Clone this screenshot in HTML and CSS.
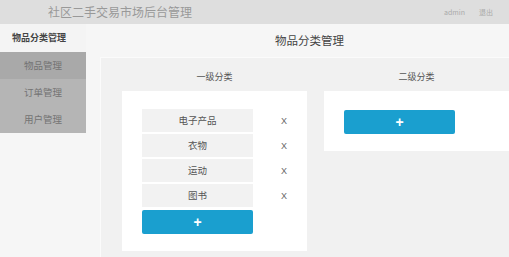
FILE: index.html
```html
<!DOCTYPE html>
<html lang="zh-CN">
<head>
  <meta charset="UTF-8">
  <meta name="viewport" content="width=device-width, initial-scale=1.0">
  <title>社区二手交易市场后台管理</title>
  <link rel="stylesheet" href="styles.css">
</head>
<body>
  <div class="header">
    <div class="site-title">社区二手交易市场后台管理</div>
    <div class="user">
      <span class="user-name">admin</span>
      <span class="logout">退出</span>
    </div>
  </div>

  <div class="layout">
    <div class="sidebar">
      <div class="sidebar-title">物品分类管理</div>
      <ul class="menu">
        <li class="active">物品管理</li>
        <li>订单管理</li>
        <li>用户管理</li>
      </ul>
    </div>

    <div class="main">
      <h1>物品分类管理</h1>
      <div class="panel">
        <div class="column">
          <h2>一级分类</h2>
          <div class="card">
            <div class="row"><div class="item">电子产品</div><span class="remove">X</span></div>
            <div class="row"><div class="item">衣物</div><span class="remove">X</span></div>
            <div class="row"><div class="item">运动</div><span class="remove">X</span></div>
            <div class="row"><div class="item">图书</div><span class="remove">X</span></div>
            <button class="add">+</button>
          </div>
        </div>
        <div class="column">
          <h2>二级分类</h2>
          <div class="card">
            <button class="add">+</button>
          </div>
        </div>
      </div>
    </div>
  </div>
</body>
</html>
```

FILE: styles.css
```css
body {
  font-family: "Noto Sans CJK SC", "Noto Sans", sans-serif;
  background-color: #f6f6f6;
  color: #555;
  margin: 0;
  padding: 0;
  height: 257px;
  overflow: hidden;
}
.header {
  height: 24px;
  background-color: #dedede;
  display: flex;
  align-items: center;
  justify-content: space-between;
  padding: 0 16px 0 48px;
}
.site-title {
  font-size: 12px;
  color: #999;
  line-height: 24px;
}
.user {
  display: flex;
  gap: 14px;
  font-size: 7px;
  color: #aaa;
}
.layout {
  display: flex;
}
.sidebar {
  width: 86px;
}
.sidebar-title {
  height: 28px;
  line-height: 28px;
  padding-left: 12px;
  font-size: 9px;
  font-weight: bold;
  color: #444;
  background-color: #f4f4f4;
}
.menu {
  list-style: none;
  margin: 0;
  padding: 0;
  background-color: #b5b5b5;
}
.menu li {
  height: 27px;
  line-height: 27px;
  text-align: center;
  font-size: 9.5px;
  color: #737373;
}
.menu li.active {
  background-color: #a9a9a9;
}
.main {
  flex: 1;
}
h1 {
  margin: 0;
  padding-left: 24px;
  height: 33px;
  line-height: 33px;
  text-align: center;
  font-size: 11.5px;
  font-weight: normal;
  color: #444;
}
.panel {
  margin-left: 14px;
  border: 1px solid #fbfbfb;
  border-right: none;
  background-color: #f1f1f1;
  padding: 13px 0 6px 21px;
  display: flex;
  gap: 17px;
  align-items: flex-start;
}
.column {
  width: 185px;
}
h2 {
  margin: 0 0 8px;
  font-size: 9px;
  line-height: 12px;
  font-weight: normal;
  text-align: center;
  color: #555;
}
.card {
  background-color: #fff;
  padding: 18px 20px 17px;
  display: flex;
  flex-direction: column;
  gap: 2px;
}
.row {
  display: flex;
  align-items: center;
}
.item {
  width: 111px;
  height: 23px;
  line-height: 23px;
  background-color: #f2f2f2;
  text-align: center;
  font-size: 9.5px;
  color: #555;
}
.remove {
  margin-left: 28px;
  font-family: "Liberation Sans", sans-serif;
  font-size: 9px;
  color: #666;
}
.add {
  width: 111px;
  height: 24px;
  margin-top: 1px;
  border: none;
  border-radius: 2px;
  background-color: #1a9fcf;
  color: #fff;
  font-family: "Liberation Sans", sans-serif;
  font-size: 14px;
  font-weight: bold;
  line-height: 24px;
  padding: 0;
}
```
